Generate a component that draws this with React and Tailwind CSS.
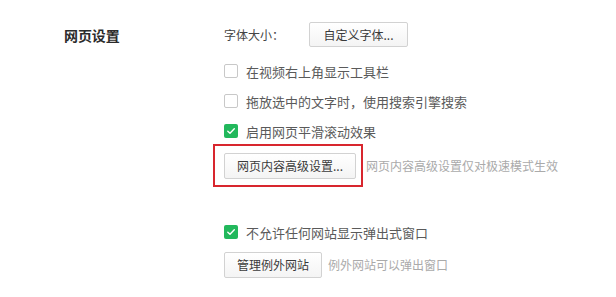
const FONT = "font-['Microsoft_YaHei','Noto_Sans_CJK_SC',sans-serif]";

function Checkbox({ checked }) {
    if (checked) {
        return (
            <span className="flex h-[14px] w-[14px] shrink-0 items-center justify-center rounded-[2px] bg-[#22b85c]">
                <svg width="10" height="10" viewBox="0 0 10 10" fill="none">
                    <path d="M1.8 5.2 4 7.3 8.3 2.8" stroke="#fff" strokeWidth="1.4" strokeLinecap="round" strokeLinejoin="round" />
                </svg>
            </span>
        );
    }
    return <span className="h-[14px] w-[14px] shrink-0 rounded-[2px] border border-[#c8c8c8] bg-white" />;
}

function CheckRow({ checked, label, className = '' }) {
    return (
        <div className={`flex h-[30px] items-center gap-[8px] ${className}`}>
            <Checkbox checked={checked} />
            <span className="text-[13px] leading-none text-[#5a5a5a]">{label}</span>
        </div>
    );
}

function Button({ children, className = '' }) {
    return (
        <button
            type="button"
            className={`flex shrink-0 items-center justify-center rounded-[2px] border border-[#d2d2d2] bg-[linear-gradient(180deg,#ffffff,#f4f4f4)] text-[12px] leading-none text-[#3a3a3a] ${className}`}
        >
            {children}
        </button>
    );
}

export default function App() {
    return (
        <div className={`flex h-[297px] w-[616px] bg-white pl-[64px] ${FONT}`}>
            <div className="w-[160px] shrink-0 pt-[28px]">
                <h3 className="text-[14px] font-bold leading-[14px] tracking-[-0.1px] text-[#2b2b2b]">网页设置</h3>
            </div>

            <div className="flex flex-col pt-[22px]">
                <div className="flex h-[25px] items-center">
                    <span className="w-[85px] text-[12px] leading-none text-[#444]">字体大小：</span>
                    <Button className="h-[25px] w-[99px]">自定义字体...</Button>
                </div>

                <CheckRow className="mt-[9px]" label="在视频右上角显示工具栏" />
                <CheckRow label="拖放选中的文字时，使用搜索引擎搜索" />
                <CheckRow checked label="启用网页平滑滚动效果" />

                <div className="relative mt-[7px] flex h-[26px] items-center gap-[10px]">
                    <Button className="h-[26px] w-[132px]">网页内容高级设置...</Button>
                    <span className="text-[12px] leading-none text-[#aaa]">网页内容高级设置仅对极速模式生效</span>
                    {/* highlight box drawn over the button */}
                    <div className="pointer-events-none absolute left-[-11px] top-[-9px] h-[43px] w-[150px] border-2 border-[#d8262e]" />
                </div>

                <CheckRow checked className="mt-[38px]" label="不允许任何网站显示弹出式窗口" />

                <div className="mt-[5px] flex h-[26px] items-center gap-[6px]">
                    <Button className="h-[26px] w-[98px]">管理例外网站</Button>
                    <span className="text-[12px] leading-none text-[#aaa]">例外网站可以弹出窗口</span>
                </div>
            </div>
        </div>
    );
}
